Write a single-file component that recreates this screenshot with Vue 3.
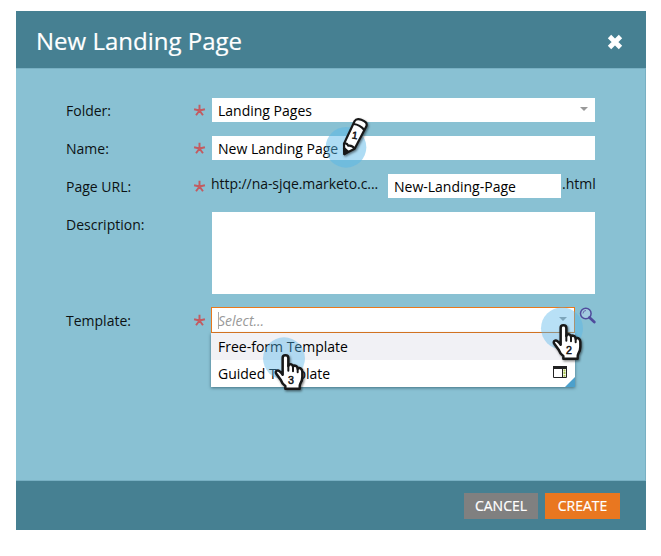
<script setup>
import { ref } from 'vue'

const folder = ref('Landing Pages')
const name = ref('New Landing Page')
const slug = ref('New-Landing-Page')
const templates = ['Free-form Template', 'Guided Template']
const hands = [
  { n: 2, cls: 'step-two' },
  { n: 3, cls: 'step-three' },
]
const star = 'M6 6V.7M6 6l5-1.200M6 6l3.2 4.400M6 6l-3.2 4.400M6 6L1 4.800'
</script>

<template>
  <main class="page">
    <section class="dialog">
      <header class="head">
        <h1>New Landing Page</h1>
        <svg class="close" viewBox="0 0 14 14"><path d="M2.200 2.200l9.600 9.600M11.800 2.200l-9.600 9.600" /></svg>
      </header>

      <div class="body">
        <div class="row">
          <span class="label">Folder:</span>
          <svg class="star" viewBox="0 0 12 12"><path :d="star" /></svg>
          <div class="field select"><span>{{ folder }}</span><i class="caret"></i></div>
        </div>
        <div class="row">
          <span class="label">Name:</span>
          <svg class="star" viewBox="0 0 12 12"><path :d="star" /></svg>
          <div class="field"><span>{{ name }}</span></div>
        </div>
        <div class="row">
          <span class="label">Page URL:</span>
          <svg class="star" viewBox="0 0 12 12"><path :d="star" /></svg>
          <div class="url">
            <span class="host">http://na-sjqe.marketo.c...</span>
            <div class="field slug"><span>{{ slug }}</span></div>
            <span class="ext">.html</span>
          </div>
        </div>
        <div class="row tall">
          <span class="label">Description:</span>
          <div class="area"></div>
        </div>
        <div class="row template-row">
          <span class="label">Template:</span>
          <svg class="star" viewBox="0 0 12 12"><path :d="star" /></svg>
          <div class="combo">
            <div class="field select active"><span class="placeholder">Select...</span><i class="caret"></i></div>
            <ul class="menu">
              <li v-for="(t, i) in templates" :key="t" :class="{ hover: i === 0 }">
                <span>{{ t }}</span>
                <svg v-if="i === 1" class="panel" viewBox="0 0 14 12">
                  <path fill="#fff" stroke="#222" d="M.5.5h13v11H.5z" />
                  <path fill="#222" d="M0 0h14v3H0zM9 2h1v10H9z" />
                  <path stroke="#a9c84c" stroke-width="2" stroke-dasharray="2 .6" d="M11.500 3.500V11" />
                </svg>
              </li>
              <i class="corner"></i>
            </ul>
          </div>
          <svg class="search" viewBox="0 0 17 17">
            <circle cx="6.800" cy="6.500" r="5.300" fill="#a2cbe0" stroke="#4f4b9c" stroke-width="1.500" />
            <path d="M4 6.500a3 3 0 0 1 3-3" fill="none" stroke="#6868ad" />
            <path d="M10.500 10.500l4.800 4.500" stroke="#4f4b9c" stroke-width="2.700" stroke-linecap="round" />
          </svg>
        </div>
      </div>

      <footer class="foot">
        <button class="btn cancel">CANCEL</button>
        <button class="btn create">CREATE</button>
      </footer>
    </section>

    <svg class="marker step-one" viewBox="0 0 180 180">
      <circle cx="78" cy="112" r="61" fill="#55b5e9" fill-opacity=".48" />
      <g class="shade" fill="#fff" stroke="#181818" stroke-width="6.500" stroke-linejoin="round">
        <path d="M72 101L104 33Q109 24 124 29Q144 36 139 49L104 116L73 132Z" />
        <path fill="none" d="M101 42Q120 44 133 60M72 101Q80 97 85 107Q97 105 104 116" />
        <path fill="#181818" d="M72 114L84 125L73 132Z" />
      </g>
      <text x="96" y="87" font-size="31" transform="rotate(8 104 76)">1</text>
    </svg>

    <svg v-for="h in hands" :key="h.n" class="marker" :class="h.cls" viewBox="0 0 180 180">
      <circle cx="75" cy="70" r="63" fill="#55b5e9" fill-opacity=".42" />
      <g class="shade" fill="#fff" stroke="#181818" stroke-width="7.500" stroke-linejoin="round" stroke-linecap="round">
        <path d="M71 119V68Q71 61 79 61Q88 61 88 69V93Q90 86 97 88Q102 90 102 95Q105 90 111 93Q116 95 116 101Q121 97 126 101Q130 104 130 111V126Q130 137 124 146Q121 151 122 161H79V153Q69 146 66 136L53 118Q47 110 54 107Q60 104 71 119Z" />
        <path fill="none" stroke-width="6" d="M88 91V107M102 94V109M116 100V112" />
      </g>
      <text x="87" y="146" font-size="32">{{ h.n }}</text>
    </svg>
  </main>
</template>

<style>
body { margin: 0; background: #fff; }
</style>

<style scoped>
.page {
  position: relative;
  width: 661px;
  height: 556px;
  box-sizing: border-box;
  padding: 11px 15px 26px 16px;
  font-family: "Open Sans", sans-serif;
  font-size: 14px;
  color: #0c1214;
  overflow: hidden;
}
.dialog { display: flex; flex-direction: column; height: 519px; background: #89c1d3; }
.head {
  display: flex;
  align-items: center;
  justify-content: space-between;
  box-sizing: border-box;
  height: 57px;
  padding: 4px 23px 0 20px;
  background: #468092;
}
h1 { margin: -2px 0 0; font-size: 24px; font-weight: 400; line-height: 34px; color: #fff; -webkit-text-stroke: .2px #fff; }
.close { width: 16px; height: 16px; }
.close path { stroke: #fff; stroke-width: 4.200; fill: none; }
.body {
  flex: 1;
  display: flex;
  flex-direction: column;
  gap: 14px;
  padding: 29px 51px 0 50px;
  border: solid #78b0c3;
  border-width: 1px 1px 1px 0;
}
.row { display: grid; grid-template-columns: 127px 19px 383px; height: 24px; }
.label { line-height: 25px; }
.star { width: 13px; height: 13px; margin-top: 6px; }
.star path { stroke: #c35b60; stroke-width: 1.800; fill: none; }
.field {
  display: flex;
  align-items: center;
  box-sizing: border-box;
  height: 24px;
  padding: 0 7px 0 6px;
  background: #fff;
  color: #000;
  line-height: 25px;
  white-space: nowrap;
}
.select { justify-content: space-between; }
.caret { border: solid transparent; border-width: 4px 4.500px 0; border-top-color: #999; margin-top: -2px; }
.url { display: flex; white-space: nowrap; }
.host { width: 177px; flex: none; line-height: 19px; letter-spacing: -.06px; margin-left: -1px; }
.slug { width: 173px; flex: none; }
.ext { line-height: 19px; padding-left: 1px; }
.tall { height: 82px; }
.area { grid-column: 3; background: #fff; height: 82px; }
.template-row { grid-template-columns: 127px 18px 364px 24px; height: 26px; margin-top: -1px; }
.template-row .label { line-height: 27px; }
.template-row .star { margin-top: 7px; }
.combo { position: relative; }
.active { height: 26px; border: 1px solid #e8791c; }
.placeholder { color: #999; font-style: italic; border-left: 1px solid #aaa; line-height: 17px; text-indent: -1px; margin-top: 0; }
.menu {
  position: absolute;
  top: 26px;
  left: 0;
  right: 0;
  margin: 0;
  padding: 0;
  list-style: none;
  color: #000;
  background: #fff;
  box-shadow: 0 1px 3px rgba(30, 70, 85, .65);
}
li { display: flex; align-items: center; justify-content: space-between; height: 27px; padding: 0 8px 0 7px; }
.hover { background: #f1f1f5; }
.panel { width: 14px; height: 12px; margin-top: -4px; }
.corner { position: absolute; right: 0; bottom: 0; border: 5px solid; border-color: transparent #4ba0cc #4ba0cc transparent; }
.search { width: 17px; height: 17px; margin-left: 4px; }
.foot {
  display: flex;
  justify-content: flex-end;
  gap: 7px;
  box-sizing: border-box;
  height: 49px;
  padding: 12px 26px 0 0;
  background: #468092;
}
.btn { width: 75px; height: 26px; padding: 0; border: 0; color: #fff; font: 14px/26px "Open Sans", sans-serif; -webkit-text-stroke: .2px #fff; }
.cancel { width: 74px; background: #808080; }
.create { background: #e97720; }
.marker { position: absolute; width: 60px; height: 60px; overflow: visible; pointer-events: none; }
.marker text { font-family: "Liberation Sans", sans-serif; fill: #111; stroke: #111; stroke-width: 1.500; }
.shade { filter: drop-shadow(3px 4px 3px rgba(0, 0, 0, .5)); }
.step-one { left: 320px; top: 110px; }
.step-two { left: 537px; top: 305px; }
.step-three { left: 259px; top: 335px; }
</style>
